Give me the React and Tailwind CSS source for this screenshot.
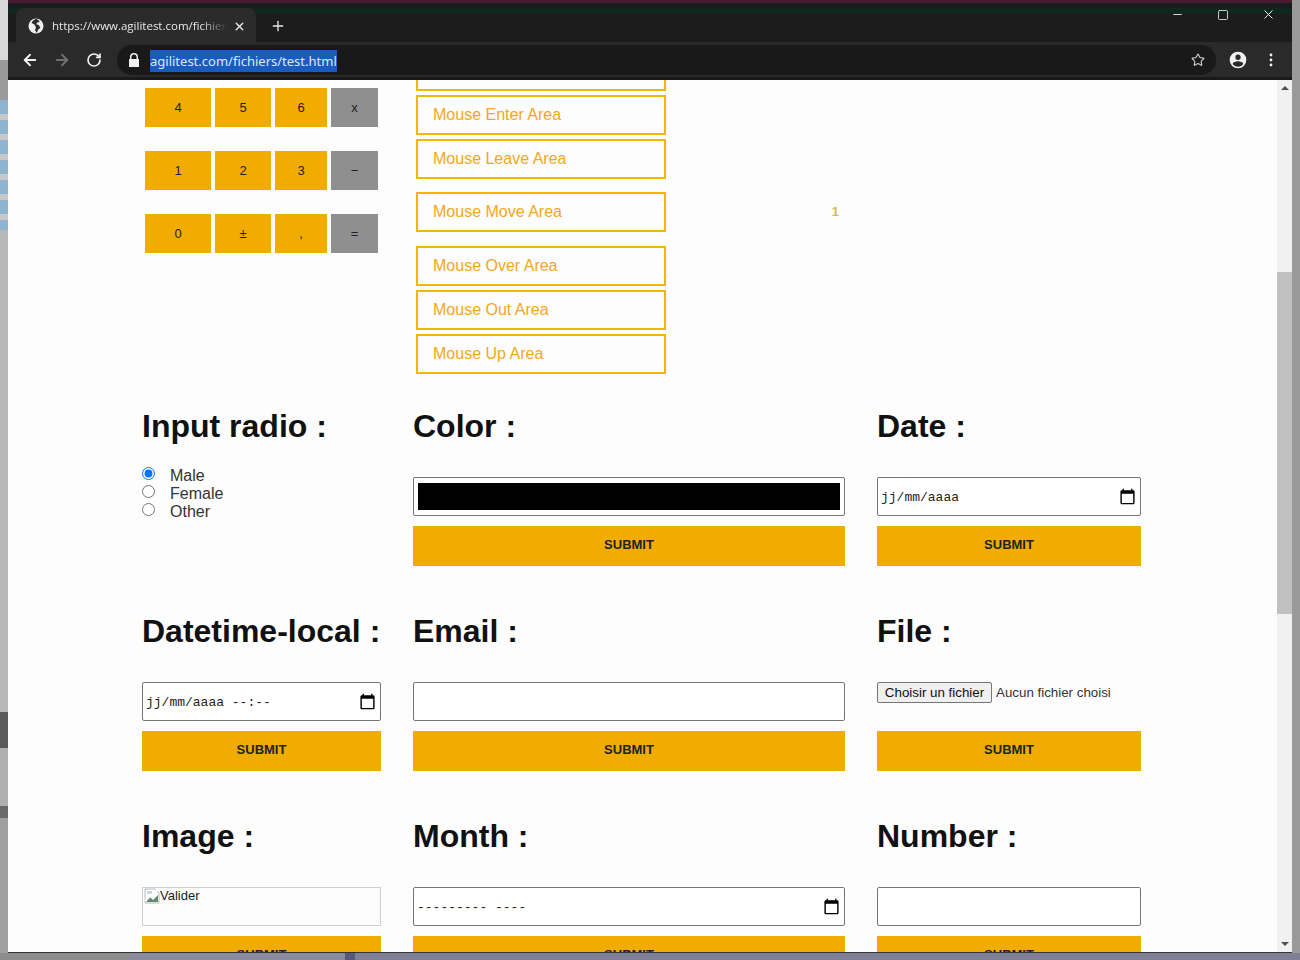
import React from "react";
import { ArrowLeft, ArrowRight, RotateCw, Star, Plus, X, Minus, Square } from "lucide-react";

const calcRows = [
  ["4", "5", "6", "x"],
  ["1", "2", "3", "−"],
  ["0", "±", ",", "="],
];

const Calendar = () => (
  <svg width="17" height="17" viewBox="0 0 24 24" fill="#000">
    <path d="M20 3h-1V1h-2v2H7V1H5v2H4c-1.1 0-2 .9-2 2v16c0 1.1.9 2 2 2h16c1.1 0 2-.9 2-2V5c0-1.1-.9-2-2-2zm0 18H4V8h16v13z" />
  </svg>
);

const BrokenImage = () => (
  <svg width="16" height="16" viewBox="0 0 16 16" className="shrink-0">
    <path d="M1 1h10l4 4v10H1z" fill="#fff" stroke="#b5bcb8" />
    <path d="M2 14l4-5 3 3 5-5v7H2z" fill="#5f8a70" />
    <path d="M3 3h5v3H3z" fill="#c4d8e8" />
    <path d="M1 13L13 2" stroke="#fff" strokeWidth="2" />
  </svg>
);

const Heading = ({ children }) => (
  <h2 className="h-10 text-[32px] leading-10 font-bold text-[#111] whitespace-nowrap">{children}</h2>
);

const Submit = () => (
  <button className="mt-2.5 h-10 w-full shrink-0 bg-[#f0ad00] pb-[2px] text-[13px] font-bold text-[#222]">SUBMIT</button>
);

const Field = ({ children, className = "" }) => (
  <div className={`flex h-[39px] items-center justify-between rounded-[2px] border border-[#767676] bg-white ${className}`}>
    {children}
  </div>
);

const DateField = ({ text }) => (
  <Field className="pr-1 pl-[3px]">
    <span className="pt-[2px] font-['Liberation_Mono',monospace] text-[13px] whitespace-pre text-[#222]">{text}</span>
    <Calendar />
  </Field>
);

const Cell = ({ title, children, submit = true }) => (
  <div className="flex flex-col">
    <Heading>{title}</Heading>
    <div className="mt-[31px] flex flex-col">
      {children}
      {submit && <Submit />}
    </div>
  </div>
);

const MouseBox = ({ label, className = "" }) => (
  <div className={`flex h-10 w-[250px] shrink-0 items-center border-2 border-[#f0b800] pl-[15px] text-base text-[#f5a623] ${className}`}>
    {label}
  </div>
);

const Radio = ({ label, checked }) => (
  <label className="flex h-[18px] items-center gap-[15px] text-base leading-[18px] text-[#333]">
    <input type="radio" name="gender" defaultChecked={checked} className="mb-1.5 h-[13px] w-[13px] accent-[#0075ff]" />
    {label}
  </label>
);

const TabStrip = () => (
  <div className="flex h-[42px] shrink-0 items-end border-t-[3px] border-[#4a1c34] bg-[linear-gradient(#191c1b_5px,#10261f_5px,#10261f_11px,#1c1c1c_11px)] pl-2 relative">
    <div className="flex h-[34px] w-[240px] items-center rounded-t-lg bg-[#2b2b2b] pt-[2px] pr-2.5 pl-3">
      <svg width="16" height="16" viewBox="0 0 16 16" className="shrink-0">
        <circle cx="8" cy="8" r="7.5" fill="#f1f1f1" />
        <path d="M8 .8C5.5 2 4 3.2 3.6 5l2.8 1.6L8 9.4l-1 2.8 2 2.9 1-3.4 2.4-2-1.700-2.700-2.400-.8.9-1.800 2.500-.5C11 2.400 9.500 1.300 8 .8z" fill="#2b2b2b" />
      </svg>
      <span className="ml-2 w-[175px] overflow-hidden font-['Open_Sans',sans-serif] text-[11.5px] whitespace-nowrap text-[#e8e8e8] [mask-image:linear-gradient(to_right,black_85%,transparent)]">
        https://www.agilitest.com/fichiers/test.html
      </span>
      <X size={13} strokeWidth={2.5} className="ml-auto text-[#e8e8e8]" />
    </div>
    <Plus size={16} strokeWidth={2} className="mb-2 ml-3.5 text-[#e8e8e8]" />
    <div className="absolute top-0 right-0 flex items-center text-white">
      <Minus size={13} strokeWidth={1.5} className="mt-1 mr-[33px]" />
      <Square size={12} strokeWidth={1.5} className="mt-1 mr-8" />
      <X size={15} strokeWidth={1.5} className="mt-1 mr-4" />
    </div>
  </div>
);

const Toolbar = () => (
  <div className="flex h-[38px] shrink-0 items-center border-b-[3px] border-[#1a1a1a] bg-[#2a2a2a] pl-[13px]">
    <ArrowLeft size={18} strokeWidth={2.5} className="text-[#f0f0f0]" />
    <ArrowRight size={18} strokeWidth={2.5} className="ml-3.5 text-[#707070]" />
    <RotateCw size={16} strokeWidth={2.5} className="ml-[15px] text-[#f0f0f0]" />
    <div className="ml-[15px] flex h-[30px] w-[1099px] items-center rounded-full bg-[#191919] pl-[11px]">
      <svg width="12" height="14" viewBox="0 0 12 14" fill="#f0f0f0">
        <path d="M2 6V4a4 4 0 0 1 8 0v2h1v8H1V6zm1.500 0h5V4a2.500 2.500 0 0 0-5 0z" />
      </svg>
      <span className="mt-[2px] ml-2.5 bg-[#1a5bbf] font-['Noto_Sans',sans-serif] text-[13px] leading-[22px] text-[#dce8fa]">
        agilitest.com/fichiers/test.html
      </span>
      <Star size={14} strokeWidth={2} className="mr-[11px] ml-auto text-[#c8c8c8]" />
    </div>
    <svg width="20" height="20" viewBox="0 0 24 24" fill="#f0f0f0" className="ml-3">
      <path d="M12 2a10 10 0 1 0 0 20 10 10 0 0 0 0-20zm0 3.500a3.200 3.200 0 1 1 0 6.400 3.200 3.200 0 0 1 0-6.400zM12 20c-2.600 0-4.900-1.300-6.300-3.300C5.800 14.700 9.800 13.600 12 13.600s6.200 1.100 6.300 3.100C16.900 18.700 14.600 20 12 20z" />
    </svg>
    <svg width="4" height="14" viewBox="0 0 4 14" fill="#f0f0f0" className="ml-[21px]">
      <circle cx="2" cy="2" r="1.400" />
      <circle cx="2" cy="7" r="1.400" />
      <circle cx="2" cy="12" r="1.400" />
    </svg>
  </div>
);

const Scrollbar = () => (
  <div className="flex w-[15px] shrink-0 flex-col items-center bg-[#f1f1f1]">
    <div className="mt-[6px] h-0 w-0 border-x-[4px] border-b-[4px] border-x-transparent border-b-[#505050]" />
    <div className="mt-[182px] h-[342px] w-full bg-[#c1c1c1]" />
    <div className="mt-auto mb-[6px] h-0 w-0 border-x-[4px] border-t-[4px] border-x-transparent border-t-[#505050]" />
  </div>
);

const Page = () => (
  <div className="min-w-0 flex-1 overflow-hidden bg-[#fdfdfd] pl-[134px] font-['Liberation_Sans',Arial,sans-serif]">
    <div className="grid grid-cols-[239px_432px_264px] gap-x-8">
      <div className="grid grid-cols-[66px_56px_52px_47px] content-start gap-x-1 gap-y-6 pt-2 pl-[3px]">
        {calcRows.flat().map((key, i) => (
          <button
            key={i}
            className={`h-[39px] text-[13px] text-[#222] ${i % 4 === 3 ? "bg-[#8f8f8f]" : "bg-[#f0ad00]"}`}
          >
            {key}
          </button>
        ))}
      </div>
      <div className="flex flex-col pl-[3px]">
        <MouseBox label="" className="mt-[-29px]" />
        <MouseBox label="Mouse Enter Area" className="mt-1" />
        <MouseBox label="Mouse Leave Area" className="mt-1" />
        <div className="mt-[13px] flex items-center justify-between pr-1.5">
          <MouseBox label="Mouse Move Area" />
          <span className="text-[13px] font-bold text-[#e0b84a]">1</span>
        </div>
        <MouseBox label="Mouse Over Area" className="mt-3.5" />
        <MouseBox label="Mouse Out Area" className="mt-1" />
        <MouseBox label="Mouse Up Area" className="mt-1" />
      </div>
      <div />
    </div>

    <div className="mt-8 grid grid-cols-[239px_432px_264px] gap-x-8 gap-y-[45px]">
      <div className="flex flex-col">
        <Heading>Input radio :</Heading>
        <div className="mt-[21px] flex flex-col">
          <Radio label="Male" checked />
          <Radio label="Female" />
          <Radio label="Other" />
        </div>
      </div>
      <Cell title="Color :">
        <Field className="px-1 py-[5px]">
          <div className="h-full w-full bg-black" />
        </Field>
      </Cell>
      <Cell title="Date :">
        <DateField text="jj/mm/aaaa" />
      </Cell>

      <Cell title="Datetime-local :">
        <DateField text="jj/mm/aaaa --:--" />
      </Cell>
      <Cell title="Email :">
        <Field />
      </Cell>
      <Cell title="File :">
        <div className="flex h-[39px] items-start text-[13.33px] text-[#333]">
          <div className="flex h-[21px] w-[115px] items-center justify-center rounded-[2px] border border-[#767676] bg-[#efefef] text-[#111]">
            Choisir un fichier
          </div>
          <span className="mt-px ml-1">Aucun fichier choisi</span>
        </div>
      </Cell>

      <Cell title="Image :">
        <div className="flex h-[39px] items-start border border-[#cfcfcf] pl-px text-[13px] leading-[16px] text-[#222]">
          <BrokenImage />
          Valider
        </div>
      </Cell>
      <Cell title="Month :">
        <DateField text="--------- ----" />
      </Cell>
      <Cell title="Number :">
        <Field />
      </Cell>
    </div>
  </div>
);

export default function App() {
  return (
    <div className="flex h-[960px] w-[1300px] flex-col overflow-hidden bg-[#8c8c8c]">
      <div className="flex h-[953px] shrink-0">
        <div className="flex w-2 shrink-0 flex-col">
          <div className="h-[60px] bg-[#d8d8d8]" />
          <div className="h-[40px] bg-[#9a9a9a]" />
          <div className="h-[130px] bg-[repeating-linear-gradient(#8fb4d0_0px,#8fb4d0_14px,#c8c8c8_14px,#c8c8c8_20px)]" />
          <div className="h-[482px] bg-[#b8b8b8]" />
          <div className="h-9 bg-[#5a5a5a]" />
          <div className="h-[58px] bg-[#b0b0b0]" />
          <div className="h-3 bg-[#6a6a6a]" />
          <div className="flex-1 bg-[#a0a0a0]" />
        </div>
        <div className="flex min-w-0 flex-1 flex-col border-b border-[#333]">
          <TabStrip />
          <Toolbar />
          <div className="flex min-h-0 flex-1">
            <Page />
            <Scrollbar />
          </div>
        </div>
        <div className="w-2 shrink-0 bg-[#9a9a9a]" />
      </div>
      <div className="flex flex-1">
        <div className="w-[130px] bg-[#8c8c8c]" />
        <div className="w-[215px] bg-[#8a8a9c]" />
        <div className="w-2.5 bg-[#55597a]" />
        <div className="flex-1 bg-[#7f8096]" />
      </div>
    </div>
  );
}
